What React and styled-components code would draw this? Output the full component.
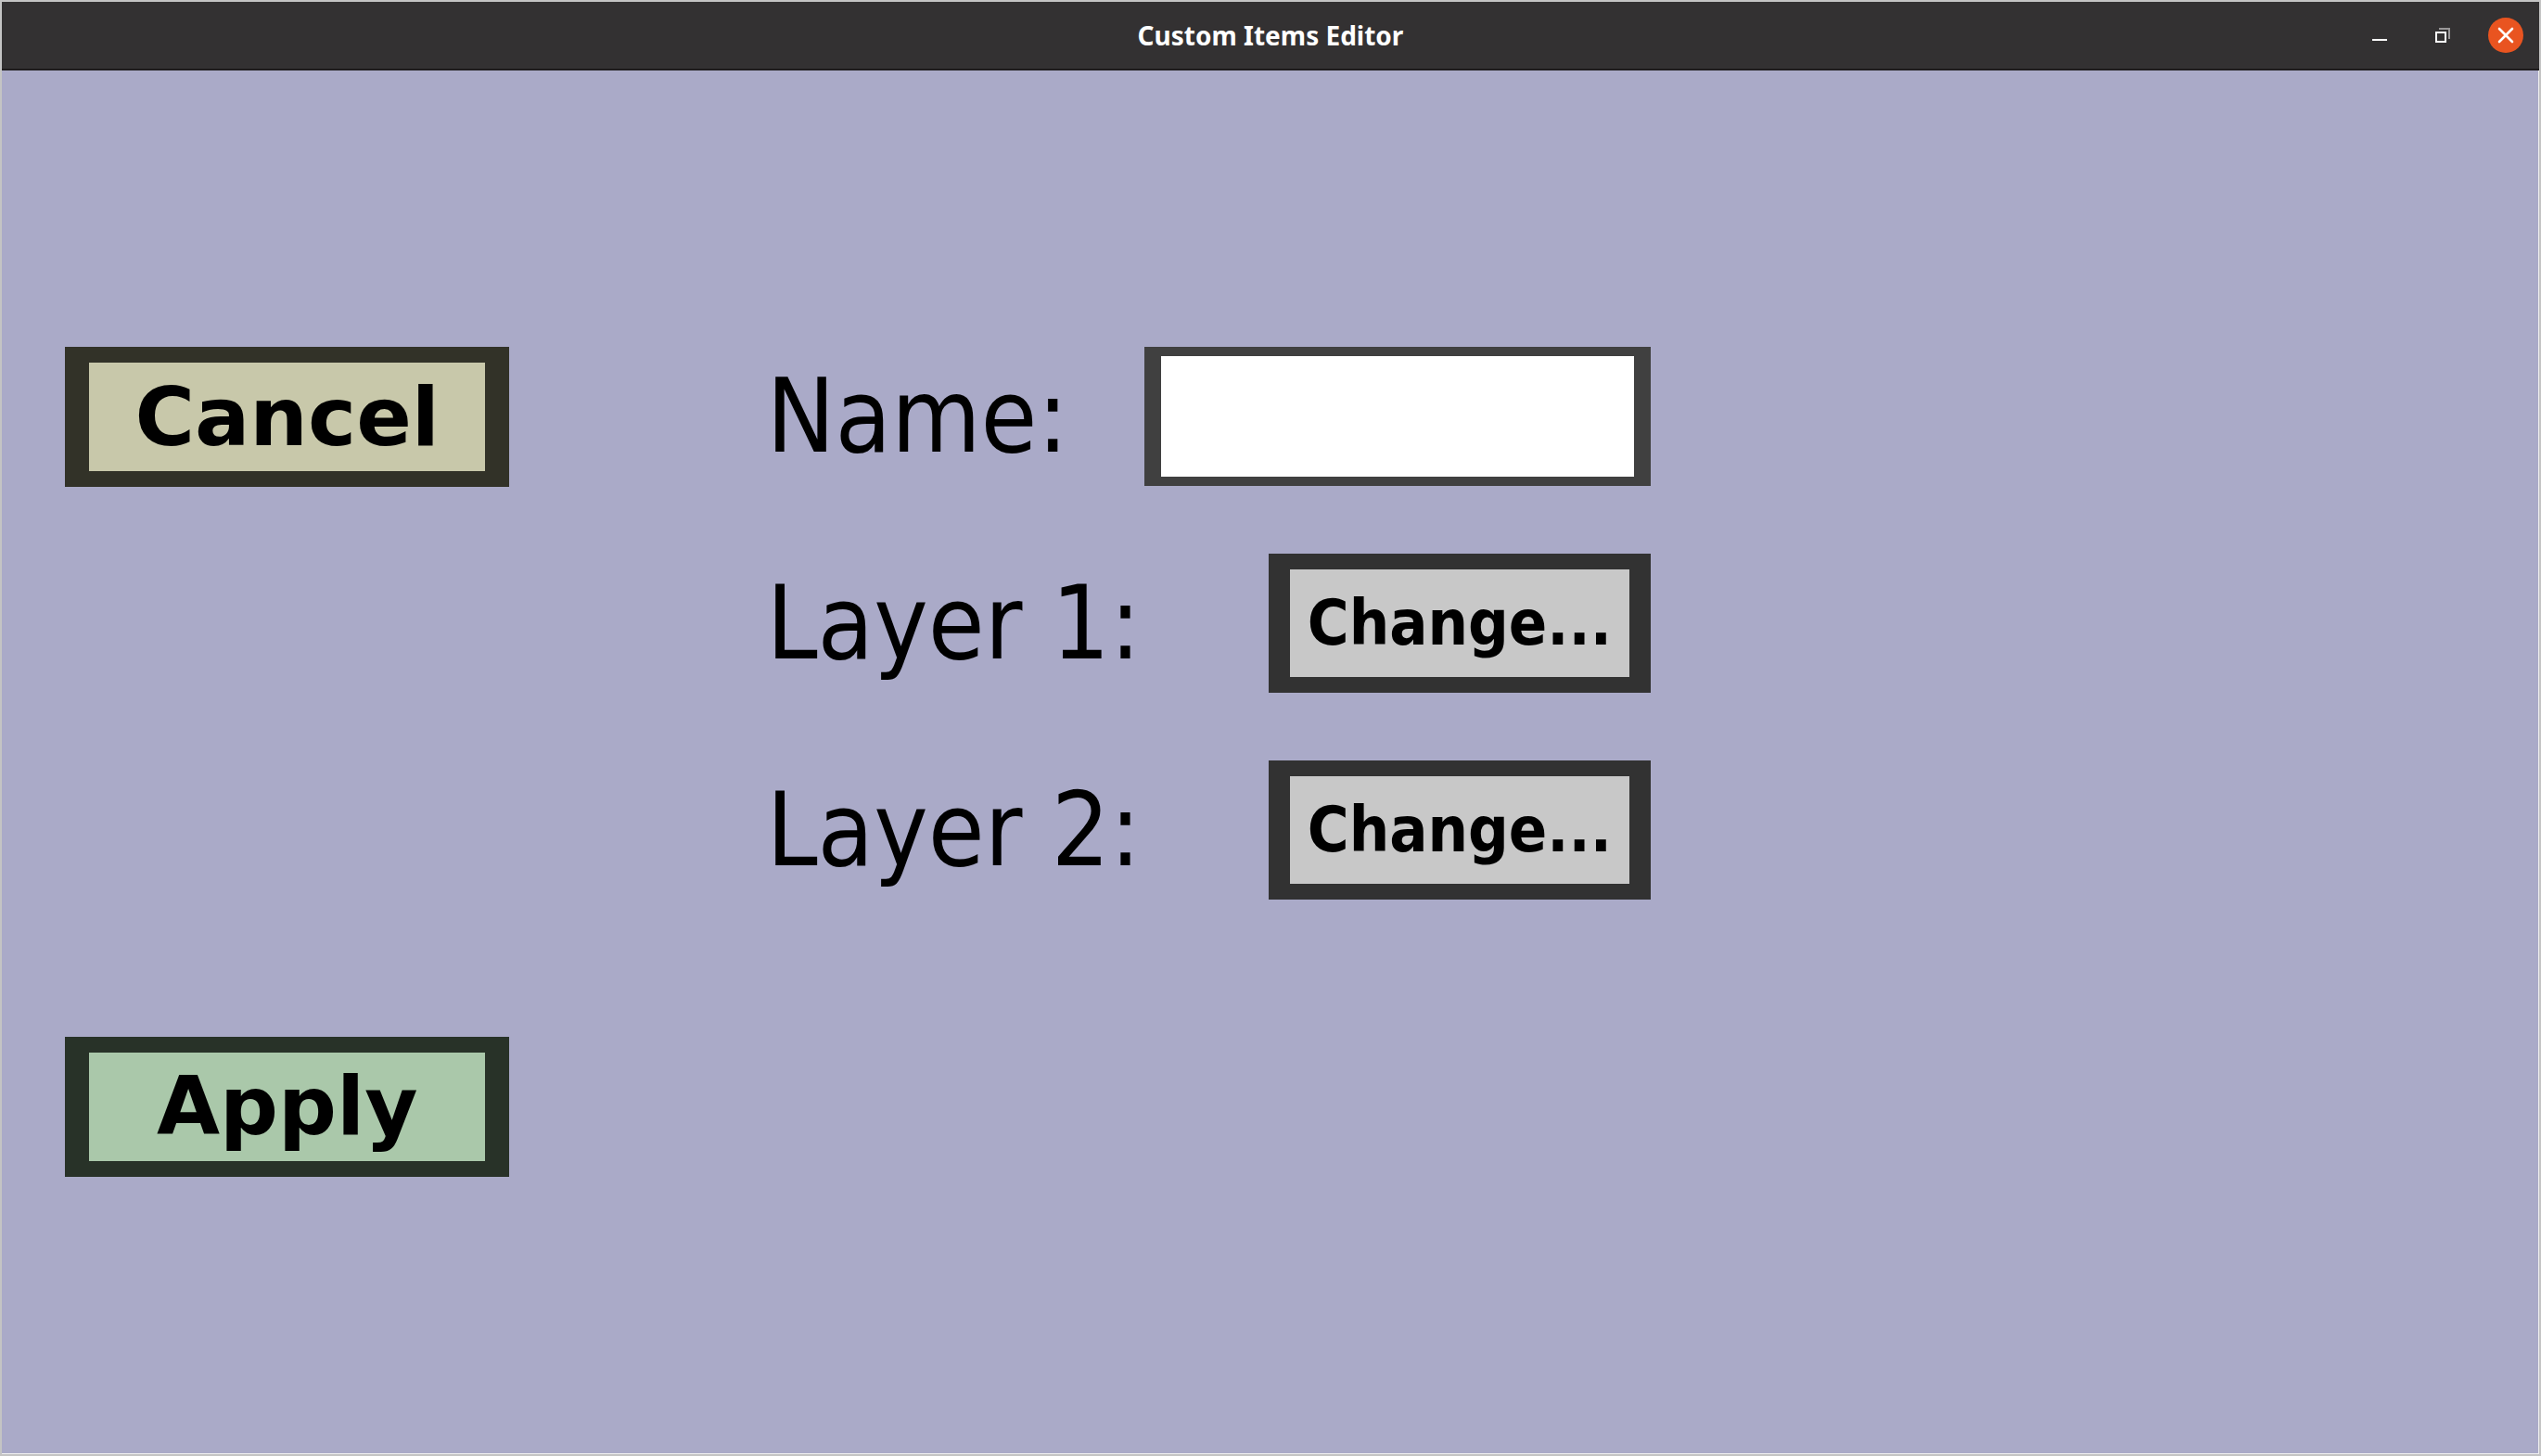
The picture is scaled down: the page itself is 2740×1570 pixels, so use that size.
import React from "react";
import styled, { createGlobalStyle } from "styled-components";

const GlobalStyle = createGlobalStyle`
  *, *::before, *::after { box-sizing: border-box; }
  body { margin: 0; background: #c4c4c4; }
  button, input { margin: 0; font: inherit; }
`;

const Window = styled.div`
  display: flex;
  flex-direction: column;
  min-height: 100vh;
  border: 2px solid #c4c4c4;
  background: #aaaac8;
  color: #000;
  font-family: "DejaVu Sans", sans-serif;
`;

const TitleBar = styled.header`
  display: grid;
  grid-template-columns: 1fr auto 1fr;
  align-items: center;
  height: 74px;
  padding: 0 17px;
  background: #333132;
  border-bottom: 2px solid #1f1c1e;
`;

const Title = styled.h1`
  grid-column: 2;
  margin: 0;
  color: #fff;
  font-family: "Noto Sans", sans-serif;
  font-size: 28px;
  font-weight: 700;
  line-height: 38px;
`;

const WindowControls = styled.div`
  display: flex;
  justify-content: flex-end;
  gap: 30px;
`;

const WindowButton = styled.button`
  display: flex;
  width: 38px;
  height: 38px;
  padding: 0;
  border: 0;
  border-radius: 50%;
  background: ${({ $accent }) => ($accent ? "#e95420" : "transparent")};
`;

const Editor = styled.main`
  flex: 1;
  display: grid;
  grid-template-columns: 5fr 35fr 20fr 70fr 70fr;
  grid-template-rows: 20fr 60fr 20fr;
  border-right: 1px solid #f0f0f0;
  border-bottom: 1px solid #f0f0f0;
`;

const Actions = styled.div`
  grid-area: 2 / 2;
  display: flex;
  flex-direction: column;
  justify-content: space-between;
`;

const Form = styled.form`
  grid-area: 2 / 4;
  display: flex;
  flex-direction: column;
  gap: 73px;
`;

const Field = styled.div`
  display: flex;
  align-items: center;
  justify-content: space-between;
  height: 150px;
`;

const Label = styled.label`
  padding-left: 4px;
  font-family: "DejaVu Sans Condensed", "DejaVu Sans", sans-serif;
  font-size: 110px;
  line-height: 150px;
  white-space: nowrap;
`;

const NameInput = styled.input`
  width: 57%;
  height: 150px;
  padding: 0 16px;
  border: 10px solid #404040;
  border-width: 10px 18px;
  border-radius: 0;
  background: #fff;
  font-size: 68px;
  outline: none;
`;

const ActionButton = styled.button`
  width: 100%;
  height: 151px;
  padding: 0;
  border: 17px solid ${({ $edge }) => $edge};
  border-width: 17px 26px;
  background: ${({ $fill }) => $fill};
  color: #000;
  font-size: 88px;
  font-weight: 700;
  line-height: 108px;
`;

const ChangeButton = styled.button`
  width: 43%;
  height: 150px;
  padding: 0;
  border: 17px solid #323232;
  border-width: 17px 23px;
  background: #c8c8c8;
  color: #000;
  font-family: "DejaVu Sans Condensed", "DejaVu Sans", sans-serif;
  font-size: 68px;
  font-weight: 700;
  line-height: 108px;
`;

function MinimizeIcon() {
  return (
    <svg width="38" height="38" viewBox="0 0 38 38" aria-hidden="true">
      <rect x="11" y="23" width="16" height="2" fill="#fff" />
    </svg>
  );
}

function RestoreIcon() {
  return (
    <svg width="38" height="38" viewBox="0 0 38 38" aria-hidden="true" fill="none" strokeWidth="2">
      <path d="M15 12H26V23" stroke="#999798" />
      <rect x="12" y="16" width="10" height="10" stroke="#fff" />
    </svg>
  );
}

function CloseIcon() {
  return (
    <svg width="38" height="38" viewBox="0 0 38 38" aria-hidden="true">
      <path d="M12 12L26 26M26 12L12 26" stroke="#fff" strokeWidth="2.6" strokeLinecap="round" />
    </svg>
  );
}

export default function App() {
  return (
    <>
      <GlobalStyle />
      <Window>
        <TitleBar>
          <Title>Custom Items Editor</Title>
          <WindowControls>
            <WindowButton type="button" aria-label="Minimize"><MinimizeIcon /></WindowButton>
            <WindowButton type="button" aria-label="Restore"><RestoreIcon /></WindowButton>
            <WindowButton type="button" aria-label="Close" $accent><CloseIcon /></WindowButton>
          </WindowControls>
        </TitleBar>
        <Editor>
          <Actions>
            <ActionButton type="button" $edge="#323228" $fill="#c8c8aa">Cancel</ActionButton>
            <ActionButton type="submit" form="item-form" $edge="#283228" $fill="#aac8aa">Apply</ActionButton>
          </Actions>
          <Form id="item-form" onSubmit={(event) => event.preventDefault()}>
            <Field>
              <Label htmlFor="name">Name:</Label>
              <NameInput id="name" type="text" autoComplete="off" />
            </Field>
            <Field>
              <Label htmlFor="layer-1">Layer 1:</Label>
              <ChangeButton id="layer-1" type="button">Change...</ChangeButton>
            </Field>
            <Field>
              <Label htmlFor="layer-2">Layer 2:</Label>
              <ChangeButton id="layer-2" type="button">Change...</ChangeButton>
            </Field>
          </Form>
        </Editor>
      </Window>
    </>
  );
}
